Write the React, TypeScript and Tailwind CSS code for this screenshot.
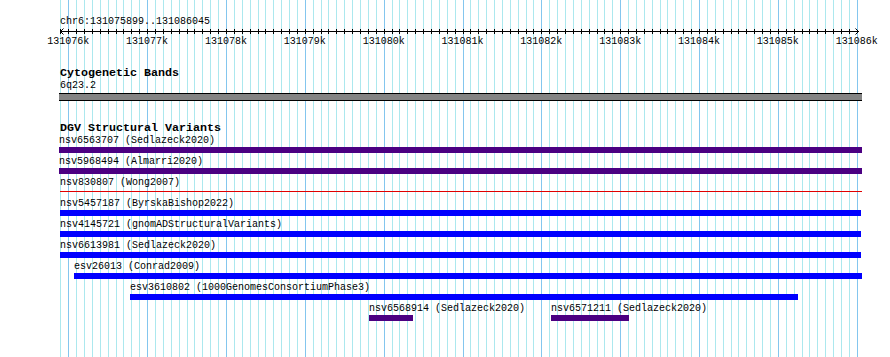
const MINOR = 7.884;
const FIRST_MAJOR = 68.3;

// grid positions: n = -1 .. 100, major every 10
const gridLines = Array.from({ length: 102 }, (_, i) => {
  const n = i - 1;
  return { x: Math.round(FIRST_MAJOR + n * MINOR) + 0.5, major: n % 10 === 0 };
});

const rulerLabels = Array.from({ length: 11 }, (_, k) => ({
  x: FIRST_MAJOR + k * 78.84,
  text: `${131076 + k}k`,
}));

type Feature = { label: string; start: number; end: number; color: string; thin?: boolean };

const rows: Feature[][] = [
  [{ label: "nsv6563707 (Sedlazeck2020)", start: 59, end: 862, color: "bg-[#4b0082]" }],
  [{ label: "nsv5968494 (Almarri2020)", start: 59, end: 862, color: "bg-[#4b0082]" }],
  [{ label: "nsv830807 (Wong2007)", start: 60, end: 862, color: "bg-[#e00000]", thin: true }],
  [{ label: "nsv5457187 (ByrskaBishop2022)", start: 60, end: 861, color: "bg-[#0000ff]" }],
  [{ label: "nsv4145721 (gnomADStructuralVariants)", start: 60, end: 861, color: "bg-[#0000ff]" }],
  [{ label: "nsv6613981 (Sedlazeck2020)", start: 60, end: 861, color: "bg-[#0000ff]" }],
  [{ label: "esv26013 (Conrad2009)", start: 74, end: 862, color: "bg-[#0000ff]" }],
  [{ label: "esv3610802 (1000GenomesConsortiumPhase3)", start: 130, end: 798, color: "bg-[#0000ff]" }],
  [
    { label: "nsv6568914 (Sedlazeck2020)", start: 369, end: 413, color: "bg-[#4b0082]" },
    { label: "nsv6571211 (Sedlazeck2020)", start: 551, end: 629, color: "bg-[#4b0082]" },
  ],
];

function Grid() {
  return (
    <svg className="absolute inset-0" width={890} height={357} shapeRendering="crispEdges">
      {gridLines.map((l, i) => (
        <line key={i} x1={l.x} x2={l.x} y1={0} y2={357} stroke={l.major ? "#84c6ee" : "#ace8ee"} strokeWidth={1} />
      ))}
    </svg>
  );
}

function Ruler() {
  return (
    <div className="relative h-[22px]">
      <svg className="absolute left-0 top-0" width={890} height={10}>
        <line x1={60} x2={859} y1={3.5} y2={3.5} stroke="#000" strokeWidth={1} shapeRendering="crispEdges" />
        {gridLines.slice(0, 101).map((l, i) => (
          <line key={i} x1={l.x} x2={l.x} y1={1} y2={6} stroke="#000" strokeWidth={1} shapeRendering="crispEdges" />
        ))}
        <polyline points="63.5,0.5 60.5,3.5 63.5,6.5" fill="none" stroke="#000" strokeWidth={1} />
        <polyline points="855.5,0.5 858.5,3.5 855.5,6.5" fill="none" stroke="#000" strokeWidth={1} />
      </svg>
      {rulerLabels.map((r) => (
        <div
          key={r.text}
          className="absolute top-[8px] -translate-x-1/2 text-[10px] leading-[12px] text-black whitespace-nowrap"
          style={{ left: r.x }}
        >
          {r.text}
        </div>
      ))}
    </div>
  );
}

function FeatureRow({ features }: { features: Feature[] }) {
  return (
    <div className="relative h-[21px]">
      {features.map((f) => (
        <div key={f.label} className="absolute top-0" style={{ left: f.start, width: f.end - f.start }}>
          <div className="h-[12px] text-[10px] leading-[12px] whitespace-nowrap text-black">{f.label}</div>
          {f.thin ? (
            <div className="pt-[2px]">
              <div className={`h-[1px] ${f.color}`} />
            </div>
          ) : (
            <div className={`h-[6px] ${f.color}`} />
          )}
        </div>
      ))}
    </div>
  );
}

export default function App() {
  return (
    <div
      className="relative w-[890px] h-[357px] overflow-hidden bg-white text-black"
      style={{ fontFamily: '"Liberation Mono", "DejaVu Sans Mono", monospace' }}
    >
      <Grid />
      <div className="relative pt-[16px]">
        <div className="pl-[60px] h-[12px] text-[10px] leading-[12px]">chr6:131075899..131086045</div>
        <Ruler />

        <div className="mt-[17px] pl-[60px] h-[13px] text-[11.67px] leading-[13px] font-bold">Cytogenetic Bands</div>
        <div className="pl-[60px] h-[12px] text-[10px] leading-[12px]">6q23.2</div>
        <div className="mt-[1px] ml-[59px] w-[803px] h-[8px] border-y border-black bg-[#848484]" />

        <div className="mt-[21px] pl-[60px] h-[13px] text-[11.67px] leading-[13px] font-bold">DGV Structural Variants</div>
        {rows.map((r, i) => (
          <FeatureRow key={i} features={r} />
        ))}
      </div>
    </div>
  );
}
